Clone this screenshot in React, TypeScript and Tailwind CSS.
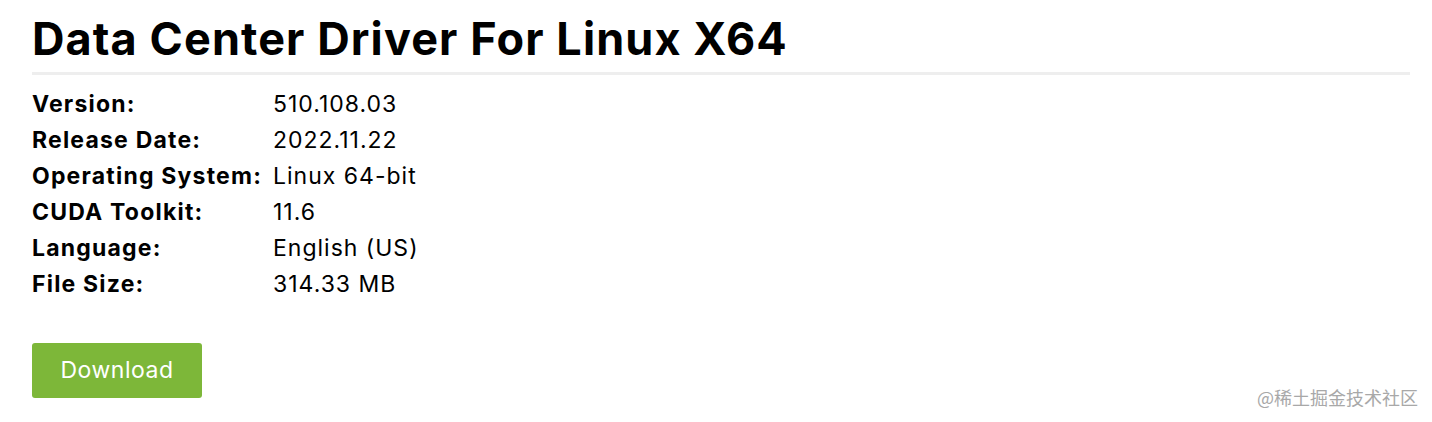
const specs: [string, string][] = [
  ["Version:", "510.108.03"],
  ["Release Date:", "2022.11.22"],
  ["Operating System:", "Linux 64-bit"],
  ["CUDA Toolkit:", "11.6"],
  ["Language:", "English (US)"],
  ["File Size:", "314.33 MB"],
];

export default function App() {
  return (
    <div className="relative h-[422px] w-[1432px] bg-white font-['Inter','Liberation_Sans',sans-serif] text-black">
      <div className="flex flex-col pl-8 pr-[22px] pt-[13px]">
        <h1 className="text-[45px] font-bold leading-[52px] tracking-[1.1px]">
          Data Center Driver For Linux X64
        </h1>
        <div className="mt-[7px] h-[3px] bg-[#eeeeee]" />
        <table className="mt-[11px] w-fit text-[23px] leading-[36px]">
          <tbody>
            {specs.map(([label, value]) => (
              <tr key={label}>
                <td className="w-[241px] font-bold tracking-[1.2px]">{label}</td>
                <td className="font-normal tracking-[1px]">{value}</td>
              </tr>
            ))}
          </tbody>
        </table>
        <button className="mt-[41px] h-[55px] w-[170px] rounded-[3px] bg-[#7db739] text-[23px] tracking-[0.5px] text-white">
          Download
        </button>
      </div>
      <span className="absolute right-[14px] top-[384px] font-['Noto_Sans_CJK_SC',sans-serif] text-[18px] text-[#a8a8a8]">
        @稀土掘金技术社区
      </span>
    </div>
  );
}
